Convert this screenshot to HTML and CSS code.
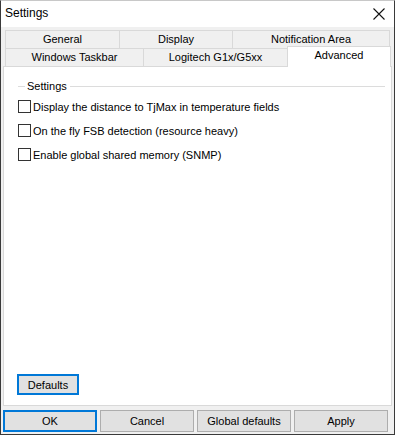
FILE: index.html
```html
<!DOCTYPE html>
<html lang="en">
<head>
    <meta charset="UTF-8">
    <title>Settings</title>
    <link rel="stylesheet" href="styles.css">
</head>
<body>
    <div class="window">
        <div class="titlebar">
            <span class="title">Settings</span>
            <svg class="close" width="12" height="12" viewBox="0 0 12 12">
                <path d="M0.5 0.5 L11.5 11.5 M11.5 0.5 L0.5 11.5" stroke="#111" stroke-width="1.1" fill="none"/>
            </svg>
        </div>

        <div class="client">
            <div class="tabs">
                <div class="tab-row">
                    <div class="tab t-general">General</div>
                    <div class="tab t-display">Display</div>
                    <div class="tab t-notify">Notification Area</div>
                </div>
                <div class="tab-row">
                    <div class="tab t-taskbar">Windows Taskbar</div>
                    <div class="tab t-logitech">Logitech G1x/G5xx</div>
                    <div class="tab t-advanced active">Advanced</div>
                </div>
            </div>

            <div class="panel">
                <div class="group-head">
                    <span class="line short"></span>
                    <span class="group-title">Settings</span>
                    <span class="line"></span>
                </div>

                <div class="checks">
                    <label class="check"><span class="box"></span>Display the distance to TjMax in temperature fields</label>
                    <label class="check"><span class="box"></span>On the fly FSB detection (resource heavy)</label>
                    <label class="check"><span class="box"></span>Enable global shared memory (SNMP)</label>
                </div>

                <div class="panel-foot">
                    <button class="btn focused btn-defaults">Defaults</button>
                </div>
            </div>

            <div class="buttons">
                <button class="btn focused">OK</button>
                <button class="btn">Cancel</button>
                <button class="btn">Global defaults</button>
                <button class="btn">Apply</button>
            </div>
        </div>
    </div>
</body>
</html>
```

FILE: styles.css
```css
html, body {
    margin: 0;
    padding: 0;
    background: #f0f0f0;
}
body {
    font-family: "Liberation Sans", Arial, sans-serif;
    font-size: 11px;
    color: #000;
}
.window {
    width: 395px;
    height: 435px;
    box-sizing: border-box;
    border: 1px solid #3a3a3a;
    border-top-color: #c8c8c8;
    display: flex;
    flex-direction: column;
}
.titlebar {
    height: 26px;
    background: #fff;
    display: flex;
    align-items: center;
    justify-content: space-between;
    padding: 0 9px 0 4px;
    flex-shrink: 0;
}
.title {
    font-size: 12px;
    margin-top: -2px;
}
.close {
    margin-top: -1px;
}
.client {
    flex: 1;
    background: #f0f0f0;
    padding: 3px 1px 0 2px;
    display: flex;
    flex-direction: column;
}
.tabs {
    padding-left: 2px;
}
.tab-row {
    display: flex;
    height: 18px;
}
.tab {
    box-sizing: border-box;
    height: 18px;
    border: 1px solid #d9d9d9;
    border-bottom: none;
    margin-left: -1px;
    background: #f0f0f0;
    text-align: center;
    line-height: 17px;
    white-space: nowrap;
}
.tab:first-child {
    margin-left: 0;
}
.t-general { width: 115px; }
.t-display { width: 114px; }
.t-notify { width: 158px; }
.t-taskbar { width: 139px; }
.t-logitech { width: 145px; }
.t-advanced { width: 104px; }
.tab.active {
    position: relative;
    z-index: 1;
    height: 21px;
    margin-top: -2px;
    background: #fff;
    line-height: 17px;
}
.panel {
    height: 340px;
    box-sizing: border-box;
    border: 1px solid #d9d9d9;
    background: #fff;
    margin-right: 1px;
    padding: 11px 6px 0 14px;
    display: flex;
    flex-direction: column;
}
.group-head {
    display: flex;
    align-items: center;
    height: 16px;
}
.group-head .line {
    flex: 1;
    height: 1px;
    background: #dcdcdc;
}
.group-head .line.short {
    flex: 0 0 7px;
}
.group-title {
    padding: 0 3px 0 2px;
    margin-top: -1px;
}
.checks {
    display: flex;
    flex-direction: column;
    gap: 9px;
    margin-top: 5px;
}
.check {
    display: flex;
    align-items: center;
    height: 15px;
    gap: 2px;
}
.box {
    width: 13px;
    height: 13px;
    box-sizing: border-box;
    border: 1px solid #333;
    background: #fff;
    flex-shrink: 0;
}
.panel-foot {
    margin-top: auto;
    padding-bottom: 10px;
}
.btn {
    font-family: inherit;
    font-size: 11px;
    color: #000;
    background: #e1e1e1;
    border: 1px solid #adadad;
    height: 22px;
    padding: 0;
    margin: 0;
    box-sizing: border-box;
}
.btn.focused {
    border: 2px solid #0078d7;
}
.btn-defaults {
    width: 62px;
    height: 21px;
    margin-left: -1px;
}
.buttons {
    display: flex;
    gap: 3px;
    margin-top: 4px;
}
.buttons .btn {
    width: 94px;
}
```
